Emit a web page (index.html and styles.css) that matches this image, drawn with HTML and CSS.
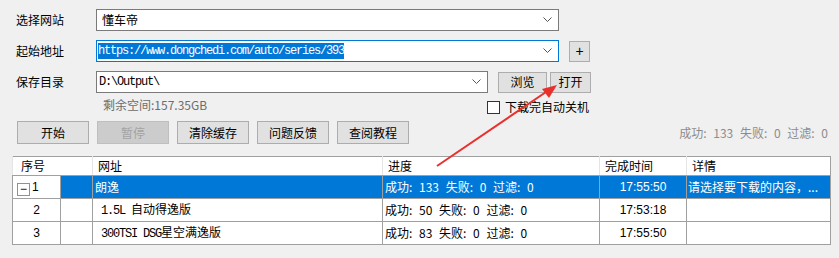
FILE: index.html
```html
<!DOCTYPE html>
<html lang="zh-CN">

<head>
  <meta charset="UTF-8">
  <title>下载工具</title>
  <link rel="stylesheet" href="styles.css">
</head>

<body>
  <div class="form">
    <div class="row">
      <span class="label">选择网站</span>
      <div class="combo wide">
        <span class="value">懂车帝</span>
        <svg class="chev" width="9" height="6" viewBox="0 0 9 6"><polyline points="0.5,0.5 4.5,4.5 8.5,0.5" fill="none" stroke="#555" stroke-width="1"/></svg>
      </div>
    </div>
    <div class="row">
      <span class="label">起始地址</span>
      <div class="combo wide focus">
        <span class="value mono"><span class="sel">https://www.dongchedi.com/auto/series/393</span></span>
        <svg class="chev" width="9" height="6" viewBox="0 0 9 6"><polyline points="0.5,0.5 4.5,4.5 8.5,0.5" fill="none" stroke="#555" stroke-width="1"/></svg>
      </div>
      <button class="btn plus">+</button>
    </div>
    <div class="row dir">
      <span class="label">保存目录</span>
      <div class="combo narrow">
        <span class="value mono">D:\Output\</span>
        <svg class="chev" width="9" height="6" viewBox="0 0 9 6"><polyline points="0.5,0.5 4.5,4.5 8.5,0.5" fill="none" stroke="#555" stroke-width="1"/></svg>
      </div>
      <button class="btn browse">浏览</button>
      <button class="btn open">打开</button>
    </div>
    <div class="row info">
      <span class="space">剩余空间:157.35GB</span>
      <label class="check"><span class="box"></span>下载完自动关机</label>
    </div>
    <div class="toolbar">
      <button class="btn tool">开始</button>
      <button class="btn tool" disabled>暂停</button>
      <button class="btn tool">清除缓存</button>
      <button class="btn tool">问题反馈</button>
      <button class="btn tool">查阅教程</button>
      <span class="status">成功: 133 失败: 0 过滤: 0</span>
    </div>
  </div>

  <table class="grid">
    <colgroup>
      <col style="width:48px">
      <col style="width:32px">
      <col style="width:290px">
      <col style="width:217px">
      <col style="width:87px">
      <col style="width:144px">
    </colgroup>
    <thead>
      <tr>
        <th colspan="2">序号</th>
        <th>网址</th>
        <th>进度</th>
        <th>完成时间</th>
        <th>详情</th>
      </tr>
    </thead>
    <tbody>
      <tr class="active">
        <td class="num first"><span class="tree">−</span>1</td>
        <td class="hl"></td>
        <td class="hl name">朗逸</td>
        <td class="hl prog">成功: 133 失败: 0 过滤: 0</td>
        <td class="hl time">17:55:50</td>
        <td class="hl detail">请选择要下载的内容，...</td>
      </tr>
      <tr>
        <td class="num">2</td>
        <td></td>
        <td class="name sub"><span class="mono">1.5L </span>自动得逸版</td>
        <td class="prog">成功: 50 失败: 0 过滤: 0</td>
        <td class="time">17:53:18</td>
        <td></td>
      </tr>
      <tr>
        <td class="num">3</td>
        <td></td>
        <td class="name sub"><span class="mono">300TSI DSG</span>星空满逸版</td>
        <td class="prog">成功: 83 失败: 0 过滤: 0</td>
        <td class="time">17:55:50</td>
        <td></td>
      </tr>
    </tbody>
  </table>

  <!-- 红色标注箭头 -->
  <svg class="arrow" width="839" height="258" viewBox="0 0 839 258">
    <line x1="437" y1="166" x2="549" y2="90" stroke="#e8312f" stroke-width="2"/>
    <polygon points="557,85 542,89 549,98" fill="#e8312f"/>
  </svg>
</body>

</html>
```

FILE: styles.css
```css
body {
  margin: 0;
  padding: 0;
  background: #f0f0f0;
  font-family: "Noto Sans CJK SC", "Noto Sans", sans-serif;
  font-size: 12px;
  color: #000;
  width: 839px;
  height: 258px;
  overflow: hidden;
}

.form {
  padding-top: 9px;
}

.row {
  display: flex;
  align-items: center;
  height: 22px;
  margin-bottom: 9px;
}

.row.dir {
  margin-bottom: 0;
}

.label {
  width: 96px;
  flex: none;
  padding-left: 16px;
  box-sizing: border-box;
  line-height: 16px;
}

.combo {
  height: 22px;
  flex: none;
  box-sizing: border-box;
  border: 1px solid #7a7a7a;
  background: #fff;
  display: flex;
  align-items: center;
  padding: 0 6px 0 5px;
}

.combo.focus {
  border-color: #0078d7;
  padding-left: 1px;
}

.wide {
  width: 463px;
}

.narrow {
  width: 392px;
  padding-left: 2px;
}

.value {
  flex: 1;
  white-space: nowrap;
  overflow: hidden;
  line-height: 16px;
}

.mono {
  font-family: "Liberation Mono", monospace;
  font-size: 12px;
  letter-spacing: -1.2px;
}

.sel {
  background: #0078d7;
  color: #fff;
  padding: 1px 0;
}

.chev {
  display: block;
}

.btn {
  height: 21px;
  flex: none;
  box-sizing: border-box;
  border: 1px solid #adadad;
  background: #e1e1e1;
  font-family: "Noto Sans CJK SC", sans-serif;
  font-size: 12px;
  padding: 0;
  color: #000;
  line-height: 18px;
}

.plus {
  width: 21px;
  margin-left: 10px;
  font-family: "Liberation Sans", sans-serif;
  font-size: 14px;
}

.browse {
  width: 49px;
  margin-left: 10px;
}

.open {
  width: 41px;
  margin-left: 3px;
}

.row.info {
  height: 28px;
  margin-bottom: 0;
  align-items: flex-start;
}

.space {
  padding-left: 103px;
  width: 487px;
  flex: none;
  box-sizing: border-box;
  color: #6d6d6d;
  line-height: 16px;
  padding-top: 4px;
}

.check {
  display: flex;
  align-items: center;
  padding-top: 6px;
  line-height: 16px;
}

.box {
  width: 13px;
  height: 13px;
  box-sizing: border-box;
  border: 1px solid #333;
  background: #fff;
  margin-right: 5px;
}

.toolbar {
  display: flex;
  align-items: center;
  gap: 8px;
  padding-left: 17px;
  padding-right: 11px;
  height: 23px;
}

.tool {
  width: 72px;
  height: 23px;
}

.tool:disabled {
  background: #cccccc;
  border-color: #bfbfbf;
  color: #a3a3a3;
}

.status {
  margin-left: auto;
  color: #8c8c8c;
  line-height: 16px;
  word-spacing: 4px;
}

.grid {
  margin: 12px 0 0 12px;
  border-collapse: collapse;
  table-layout: fixed;
  width: 819px;
  background: #fff;
  border: 1px solid #a0a0a0;
}

.grid th {
  height: 18px;
  padding: 0 0 0 5px;
  font-weight: normal;
  text-align: left;
  border-left: 1px solid #e5e5e5;
  border-bottom: 1px solid #a0a0a0;
  line-height: 16px;
}

.grid th:first-child {
  padding-left: 8px;
}

.grid td {
  height: 22px;
  padding: 0;
  border: 1px solid #a0a0a0;
  white-space: nowrap;
  overflow: hidden;
  line-height: 16px;
}

.grid td.hl {
  background: #0078d7;
  color: #fff;
}

.num {
  text-align: center;
  font-family: "Liberation Sans", sans-serif;
  font-size: 12px;
}

.num.first {
  text-align: left;
  padding-left: 4px !important;
}

.tree {
  display: inline-block;
  width: 13px;
  height: 13px;
  box-sizing: border-box;
  border: 1px solid #919191;
  line-height: 10px;
  text-align: center;
  font-family: "Liberation Sans", sans-serif;
  font-size: 12px;
  margin-right: 2px;
  vertical-align: -2px;
}

.name {
  padding-left: 2px !important;
}

.name.sub {
  padding-left: 8px !important;
}

.prog {
  padding-left: 2px !important;
  word-spacing: 4px;
}

.time {
  text-align: center;
  font-family: "Liberation Sans", sans-serif;
  font-size: 12px;
}

.detail {
  padding-left: 1px !important;
}

.arrow {
  position: absolute;
  left: 0;
  top: 0;
  pointer-events: none;
}
```
